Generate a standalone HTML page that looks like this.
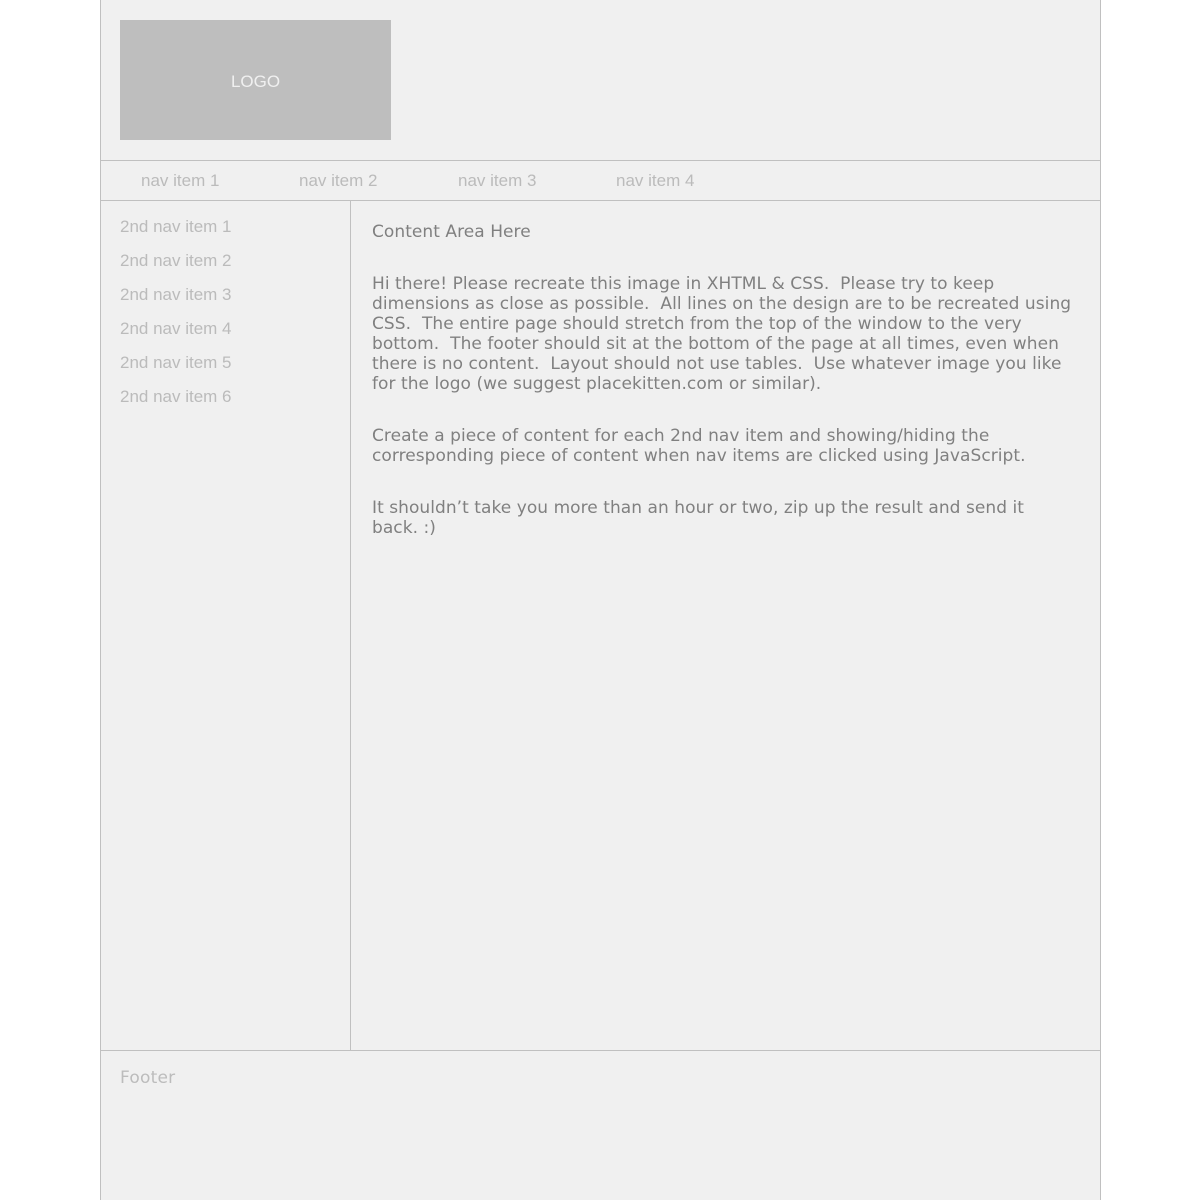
<!DOCTYPE html>
<html><head><meta charset="utf-8"><style>
html,body{margin:0;padding:0;background:#fff;width:1200px;height:1200px;overflow:hidden}
#wrap{position:absolute;left:100px;top:0;width:999px;height:1200px;background:#f0f0f0;border-left:1px solid #c0c0c0;border-right:1px solid #c0c0c0}
#logo{position:absolute;left:19px;top:20px;width:271px;height:120px;background:#bebebe;color:#f0f0f0;font:17px "Liberation Sans",sans-serif;text-align:center;line-height:124px}
#nav{position:absolute;left:0;top:160px;width:999px;height:39px;border-top:1px solid #c0c0c0;border-bottom:1px solid #c0c0c0}
#nav span{position:absolute;top:10px;font:17px "Liberation Sans",sans-serif;color:#bbb}
#side{position:absolute;left:0;top:201px;width:249px;height:849px;border-right:1px solid #c0c0c0}
#side div{position:absolute;left:19px;font:17px "Liberation Sans",sans-serif;color:#bbb}
#content{position:absolute;left:271px;top:222px;font:17px/20px "DejaVu Sans",sans-serif;color:#808080;white-space:nowrap;letter-spacing:0.05px}
#content p{margin:0 0 32px 0}
#footer{position:absolute;left:0;top:1050px;width:999px;border-top:1px solid #c0c0c0}
#footer span{position:absolute;left:19px;top:17px;font:17px "DejaVu Sans",sans-serif;color:#bcbcbc;letter-spacing:0.2px}
</style></head><body>
<div id="wrap">
<div id="logo">LOGO</div>
<div id="nav"><span style="left:40px">nav item 1</span><span style="left:198px">nav item 2</span><span style="left:357px">nav item 3</span><span style="left:515px">nav item 4</span></div>
<div id="side">
<div style="top:16px">2nd nav item 1</div>
<div style="top:50px">2nd nav item 2</div>
<div style="top:84px">2nd nav item 3</div>
<div style="top:118px">2nd nav item 4</div>
<div style="top:152px">2nd nav item 5</div>
<div style="top:186px">2nd nav item 6</div>
</div>
<div id="content">
<p>Content Area Here</p>
<p>Hi there! Please recreate this image in XHTML &amp; CSS.&nbsp; Please try to keep<br>dimensions as close as possible.&nbsp; All lines on the design are to be recreated using<br>CSS.&nbsp; The entire page should stretch from the top of the window to the very<br>bottom.&nbsp; The footer should sit at the bottom of the page at all times, even when<br>there is no content.&nbsp; Layout should not use tables.&nbsp; Use whatever image you like<br>for the logo (we suggest placekitten.com or similar).</p>
<p>Create a piece of content for each 2nd nav item and showing/hiding the<br>corresponding piece of content when nav items are clicked using JavaScript.</p>
<p>It shouldn’t take you more than an hour or two, zip up the result and send it<br>back. :)</p>
</div>
<div id="footer"><span>Footer</span></div>
</div>
</body></html>
